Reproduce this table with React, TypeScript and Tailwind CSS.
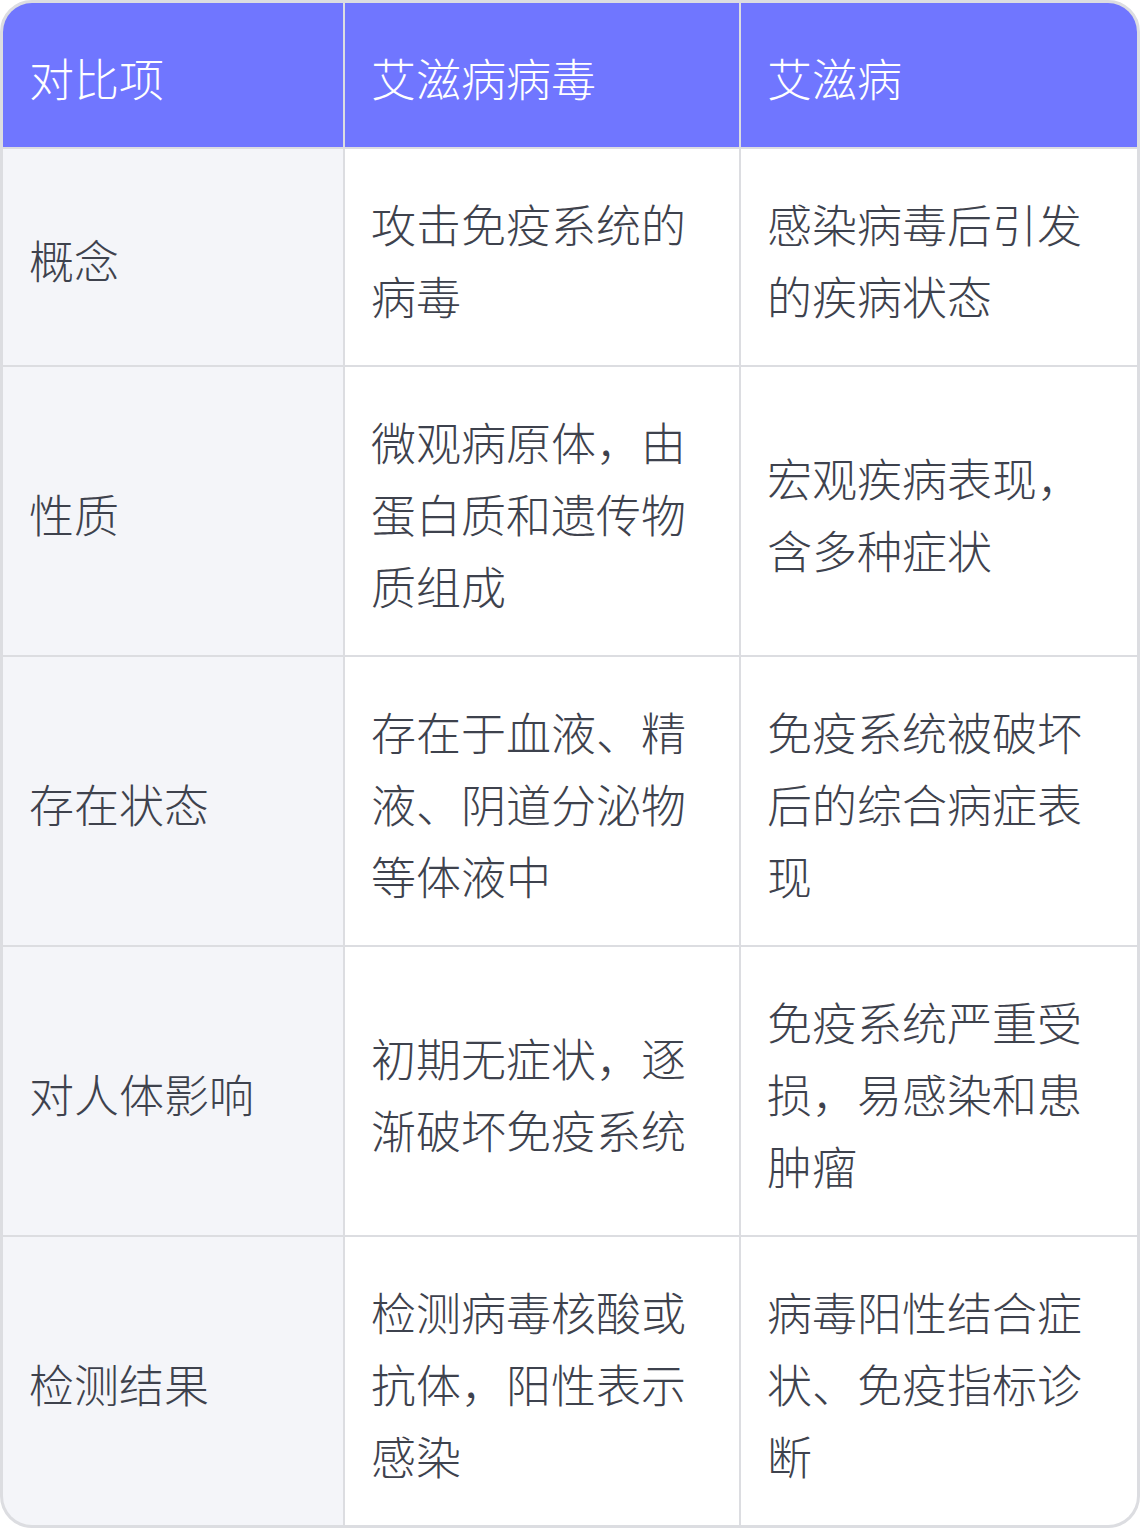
import React from "react";

const headers = ["对比项", "艾滋病病毒", "艾滋病"];

const rows: [string, string, string][] = [
  ["概念", "攻击免疫系统的病毒", "感染病毒后引发的疾病状态"],
  ["性质", "微观病原体，由蛋白质和遗传物质组成", "宏观疾病表现，含多种症状"],
  ["存在状态", "存在于血液、精液、阴道分泌物等体液中", "免疫系统被破坏后的综合病症表现"],
  ["对人体影响", "初期无症状，逐渐破坏免疫系统", "免疫系统严重受损，易感染和患肿瘤"],
  ["检测结果", "检测病毒核酸或抗体，阳性表示感染", "病毒阳性结合症状、免疫指标诊断"],
];

export default function App() {
  return (
    <div className="w-[1140px] h-[1528px] bg-white font-['Noto_Sans_CJK_SC','Noto_Sans',sans-serif] font-light">
      <div className="w-full h-full rounded-[32px] border-[3px] border-[#dcdde1] overflow-hidden bg-[#dcdde1]">
        <div className="grid grid-cols-[340px_394px_396px] gap-[2px] text-[45px] leading-[72px]">
          {headers.map((h) => (
            <div key={h} className="bg-[#7076ff] text-white pl-[26px] pr-[28px] pt-[39px] pb-[33px] h-[144px] flex items-center">
              {h}
            </div>
          ))}
          {rows.map(([a, b, c]) => (
            <React.Fragment key={a}>
              <div className="bg-[#f4f5f9] text-[#3e424d] pl-[26px] pr-[28px] pt-[39px] pb-[33px] flex items-center">{a}</div>
              <div className="bg-white text-[#3e424d] pl-[26px] pr-[28px] pt-[39px] pb-[33px] flex items-center">{b}</div>
              <div className="bg-white text-[#3e424d] pl-[26px] pr-[28px] pt-[39px] pb-[33px] flex items-center">{c}</div>
            </React.Fragment>
          ))}
        </div>
      </div>
    </div>
  );
}
